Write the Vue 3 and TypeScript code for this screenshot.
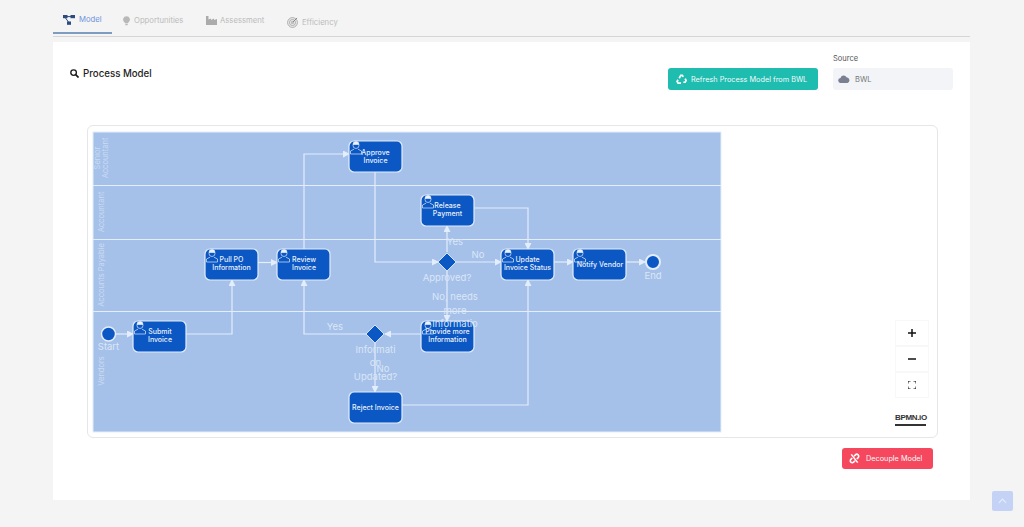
<template>
  <div class="page">
    <nav class="tabs">
      <a v-for="tab in tabs" :key="tab.name" class="tab" :class="{ active: tab.active }" :style="{ width: tab.width + 'px' }">
        <svg v-if="tab.name === 'Model'" class="tab-icon" viewBox="0 0 12 10">
          <rect x="0" y="0" width="4.500" height="3.200" fill="#2b4c7e" />
          <rect x="7.500" y="0" width="4.500" height="3.200" fill="#2b4c7e" />
          <rect x="4" y="6.500" width="4" height="3.300" fill="#2b4c7e" />
          <path d="M4 1.600h4M2.500 3L5.500 7" stroke="#2b4c7e" fill="none" />
        </svg>
        <svg v-else-if="tab.name === 'Opportunities'" class="tab-icon bulb" viewBox="0 0 8 11">
          <path d="M4 0a3.800 3.800 0 0 0-2.400 6.800C2.200 7.400 2.400 7.800 2.400 8h3.200c0-.2.2-.6.8-1.200A3.800 3.800 0 0 0 4 0z" fill="#b8b8b8" />
          <rect x="2.600" y="8.600" width="2.800" height="1.800" rx=".6" fill="#b8b8b8" />
        </svg>
        <svg v-else-if="tab.name === 'Assessment'" class="tab-icon factory" viewBox="0 0 11 9">
          <path d="M0 0h2.500v3.500L5 2.500v1.500l3-1.500v1.500l3-1v6H0z" fill="#ababab" />
        </svg>
        <svg v-else class="tab-icon target" viewBox="0 0 12 12">
          <g fill="none" stroke="#a0a0a0">
            <circle cx="6" cy="6" r="5.300" />
            <circle cx="6" cy="6" r="3.300" />
            <circle cx="6" cy="6" r="1.300" />
          </g>
          <path d="M6 6l5-5" stroke="#808080" />
        </svg>
        <span :class="{ lower: tab.name === 'Efficiency' }">{{ tab.name }}</span>
      </a>
    </nav>

    <main class="card">
      <header class="card-head">
        <h1 class="title">
          <svg class="search" viewBox="0 0 10 10">
            <circle cx="4" cy="4" r="3.100" fill="none" stroke="#1b1b1b" stroke-width="1.500" />
            <path d="M6.300 6.300L9.500 9.500" stroke="#1b1b1b" stroke-width="1.800" />
          </svg>
          Process Model
        </h1>
        <div class="actions">
          <button class="btn refresh" type="button">
            <svg class="btn-icon" viewBox="0 0 12 12" fill="none" stroke="#fff" stroke-width="1.900">
              <path d="M3.500 4.600L5.200 1.500h1.700l1 1.700" />
              <path d="M10 5l1 2.200-1 1.800H8" />
              <path d="M5.500 10H2.300L1.200 8.100l1-1.800" />
            </svg>
            Refresh Process Model from BWL
          </button>
          <div class="source">
            <label class="source-label">Source</label>
            <div class="source-box">
              <svg class="cloud" viewBox="0 0 12 8">
                <path d="M3 8a2.500 2.500 0 0 1-.5-5A3.200 3.200 0 0 1 8.500 2.200 3 3 0 0 1 9.500 8z" fill="#7a7f92" />
              </svg>
              BWL
            </div>
          </div>
        </div>
      </header>

      <section class="canvas">
        <svg class="diagram" viewBox="88 126 849 311" width="849" height="311">
          <defs>
            <marker id="arrow" markerWidth="7" markerHeight="7" refX="6" refY="3.500" orient="auto" markerUnits="userSpaceOnUse">
              <path d="M0 0L7 3.500 0 7z" fill="#e3edfb" />
            </marker>
          </defs>

          <rect x="93" y="132" width="628" height="300" fill="#a5c1e9" stroke="#e3edfb" />
          <path d="M93 185.500H721M93 239.500H721M93 311.500H721" stroke="#e3edfb" fill="none" />

          <text
            v-for="lane in lanes"
            :key="lane.x + '-' + lane.y"
            class="lane-label"
            text-anchor="middle"
            :transform="`translate(${lane.x} ${lane.y}) rotate(-90)`"
          >{{ lane.text }}</text>

          <path
            v-for="edge in edges"
            :key="edge"
            :d="edge"
            fill="none"
            stroke="#e3edfb"
            stroke-width="1.200"
            marker-end="url(#arrow)"
          />

          <circle cx="108.500" cy="334" r="7" fill="#0b57c4" stroke="#e3edfb" stroke-width="1.500" />
          <circle cx="653" cy="262" r="7" fill="#0b57c4" stroke="#e3edfb" stroke-width="2" />
          <path
            v-for="d in diamonds"
            :key="d.x"
            :d="`M${d.x} ${d.y - 9}l9 9-9 9-9-9z`"
            fill="#0b57c4"
            stroke="#d3e2f7"
          />

          <g v-for="task in tasks" :key="task.x + '-' + task.y">
            <rect :x="task.x" :y="task.y" width="53" height="31" rx="5" fill="#0b57c4" stroke="#e3edfb" stroke-width="1.200" />
            <g v-if="task.icon !== false" fill="none" stroke="#dfeafb" stroke-width=".7">
              <circle :cx="task.x + 7" :cy="task.y + 4.500" r="3" />
              <path :d="`M${task.x + 4} ${task.y + 3.500}a3 3 0 0 1 6 0z`" fill="#eef4fd" />
              <path :d="`M${task.x + 1.500} ${task.y + 13}v-3l3.500-1.800M${task.x + 1.500} ${task.y + 13}h11v-3l-3.500-1.800`" />
            </g>
            <text class="task-label" text-anchor="middle">
              <tspan v-for="(line, i) in task.lines" :key="line" :x="task.tx ?? task.x + 26.500" :y="task.ty + i * 8">{{ line }}</tspan>
            </text>
          </g>

          <text
            v-for="label in labels"
            :key="label.text + label.y"
            class="flow-label"
            :x="label.x"
            :y="label.y"
            text-anchor="middle"
          >{{ label.text }}</text>
        </svg>

        <div class="zoom-controls">
          <button class="zoom-btn" type="button">
            <svg viewBox="0 0 8 8" width="8" height="8"><path d="M4 0v8M0 4h8" stroke="#111" stroke-width="1.500" /></svg>
          </button>
          <button class="zoom-btn" type="button">
            <svg viewBox="0 0 8 8" width="8" height="8"><path d="M0 4h8" stroke="#111" stroke-width="1.500" /></svg>
          </button>
          <button class="zoom-btn" type="button">
            <svg viewBox="0 0 8 8" width="8" height="8"><path d="M0 2.500V0h2.500M5.500 0H8v2.500M8 5.500V8H5.500M2.500 8H0V5.500" fill="none" stroke="#111" /></svg>
          </button>
        </div>
        <div class="bpmn-logo">BPMN.iO</div>
      </section>

      <footer class="card-foot">
        <button class="btn decouple" type="button">
          <svg class="btn-icon" viewBox="0 0 12 12" fill="none" stroke="#fff" stroke-width="1.700">
            <path d="M2.500 1.500l7 9" />
            <path d="M5.500 3.500L7 2a2 2 0 0 1 3 3L8.500 6.500" />
            <path d="M6.500 8.500L5 10a2 2 0 0 1-3-3L3.500 5.500" />
          </svg>
          Decouple Model
        </button>
      </footer>
    </main>

    <button class="to-top" type="button">
      <svg viewBox="0 0 10 6" width="9" height="6"><path d="M1 5l4-4 4 4" fill="none" stroke="#e6ecfc" stroke-width="1.300" /></svg>
    </button>
  </div>
</template>

<script setup lang="ts">
interface Tab {
  name: string
  width: number
  active?: boolean
}

interface Task {
  x: number
  y: number
  lines: string[]
  ty: number
  tx?: number
  icon?: boolean
}

const tabs: Tab[] = [
  { name: 'Model', width: 59, active: true },
  { name: 'Opportunities', width: 82 },
  { name: 'Assessment', width: 80 },
  { name: 'Efficiency', width: 70 },
]

const lanes = [
  { x: 100, y: 158, text: 'Senior' },
  { x: 108, y: 158, text: 'Accountant' },
  { x: 104, y: 212, text: 'Accountant' },
  { x: 104, y: 275, text: 'Accounts Payable' },
  { x: 104, y: 371, text: 'Vendors' },
]

const edges = [
  'M116 334H133',
  'M186 334H232V280',
  'M258 262.500H277',
  'M304 249V154H349',
  'M375 172V262H438',
  'M447 252V226',
  'M456 262H501',
  'M474 208H528V249',
  'M554 262H573',
  'M626 262H645',
  'M447 271V321',
  'M421 334H385',
  'M366 334H304V280',
  'M375 343V392',
  'M402 405H528V280',
]

const diamonds = [
  { x: 447, y: 262 },
  { x: 375, y: 334 },
]

const tasks: Task[] = [
  { x: 349, y: 141, lines: ['Approve', 'Invoice'], ty: 154.500, tx: 375.500 },
  { x: 421, y: 195, lines: ['Release', 'Payment'], ty: 208 },
  { x: 205, y: 249, lines: ['Pull PO', 'Information'], ty: 262 },
  { x: 277, y: 249, lines: ['Review', 'Invoice'], ty: 262, tx: 304 },
  { x: 501, y: 249, lines: ['Update', 'Invoice Status'], ty: 262 },
  { x: 573, y: 249, lines: ['Notify Vendor'], ty: 266.500, tx: 600 },
  { x: 133, y: 321, lines: ['Submit', 'Invoice'], ty: 333.500, tx: 160 },
  { x: 421, y: 321, lines: ['Provide more', 'Information'], ty: 334, tx: 447.500 },
  { x: 349, y: 392, lines: ['Reject Invoice'], ty: 410, icon: false },
]

const labels = [
  { text: 'Start', x: 108.500, y: 350 },
  { text: 'End', x: 653, y: 279 },
  { text: 'Yes', x: 455, y: 245 },
  { text: 'No', x: 478, y: 258 },
  { text: 'Approved?', x: 447, y: 281 },
  { text: 'No, needs', x: 455, y: 300 },
  { text: 'more', x: 455, y: 314 },
  { text: 'Informatio', x: 455, y: 327 },
  { text: 'Yes', x: 335, y: 330 },
  { text: 'Informati', x: 375.500, y: 353 },
  { text: 'on', x: 375.500, y: 366 },
  { text: 'No', x: 383, y: 372 },
  { text: 'Updated?', x: 375.500, y: 380 },
]
</script>

<style scoped>
.page {
  position: relative;
  height: 527px;
  padding: 10px 54px 0 53px;
  box-sizing: border-box;
  background: #f4f4f4;
  font-family: Inter, "Noto Sans", sans-serif;
  overflow: hidden;
}

.tabs {
  display: flex;
  gap: 1px;
  height: 26px;
  border-bottom: 1px solid #d6d6d6;
}

.tab {
  display: flex;
  align-items: center;
  gap: 4px;
  box-sizing: border-box;
  height: 24px;
  padding: 0 0 3px 10px;
  font-size: 7.700px;
  color: #bbb;
}

.tab.active {
  color: #6f93dc;
  border-bottom: 2px solid #7d9cc0;
}

.tab-icon {
  flex: none;
  width: 12px;
  height: 10px;
}

.tab-icon.bulb {
  width: 7px;
  height: 10px;
}

.tab-icon.factory {
  width: 11px;
  height: 9px;
  margin-right: -1px;
}

.tab-icon.target {
  width: 11px;
  height: 11px;
  margin-top: 3px;
}

.lower {
  margin-top: 3px;
}

.card {
  display: flex;
  flex-direction: column;
  height: 458px;
  margin-top: 5px;
  padding: 0 17px 0 34px;
  box-sizing: border-box;
  background: #fff;
}

.card-head {
  display: flex;
  justify-content: space-between;
  height: 83px;
}

.title {
  display: flex;
  align-items: center;
  gap: 4px;
  height: 14px;
  margin: 24px 0 0 -17px;
  font-size: 9.700px;
  font-weight: 500;
  color: #1e1e1e;
}

.search {
  width: 9px;
  height: 9px;
}

.actions {
  display: flex;
  align-items: flex-end;
  gap: 15px;
  height: 48px;
}

.btn {
  display: flex;
  align-items: center;
  box-sizing: border-box;
  border: none;
  border-radius: 3px;
  font-family: inherit;
  font-size: 7.300px;
  color: #f2fbfa;
  white-space: nowrap;
}

.btn-icon {
  flex: none;
  width: 11px;
  height: 11px;
}

.refresh {
  gap: 4px;
  width: 150px;
  height: 22px;
  padding: 0 0 0 8px;
  background: #1fbcb0;
}

.source {
  display: flex;
  flex-direction: column;
  gap: 5px;
  width: 120px;
}

.source-label {
  font-size: 7.500px;
  color: #555;
}

.source-box {
  display: flex;
  align-items: center;
  gap: 5px;
  height: 22px;
  padding-left: 5px;
  border-radius: 3px;
  background: #f2f4f8;
  font-size: 7.500px;
  color: #777;
}

.cloud {
  width: 12px;
  height: 8px;
}

.canvas {
  position: relative;
  box-sizing: border-box;
  width: 851px;
  height: 313px;
  border: 1px solid #e6e6e6;
  border-radius: 6px;
}

.diagram {
  display: block;
}

.lane-label {
  font-size: 7.500px;
  fill: #cddcf2;
}

.task-label {
  font-size: 7px;
  font-weight: 500;
  fill: #e9f0fb;
}

.flow-label {
  font-size: 9.500px;
  fill: #dbe6f7;
}

.zoom-controls {
  position: absolute;
  top: 194px;
  left: 807px;
  display: flex;
  flex-direction: column;
}

.zoom-btn {
  display: flex;
  align-items: center;
  justify-content: center;
  box-sizing: border-box;
  width: 34px;
  height: 26px;
  border: 1px solid #f8f8f8;
  background: #fff;
  padding: 0;
}

.bpmn-logo {
  position: absolute;
  top: 286px;
  left: 807px;
  width: 31px;
  padding-bottom: 1px;
  border-bottom: 2px solid #333;
  font-family: "Liberation Sans", sans-serif;
  font-size: 8px;
  font-weight: 700;
  line-height: 11px;
  letter-spacing: -0.35px;
  color: #333;
  white-space: nowrap;
}

.card-foot {
  display: flex;
  justify-content: flex-end;
  width: 846px;
  margin-top: 10px;
}

.decouple {
  gap: 6px;
  width: 91px;
  height: 21px;
  padding: 0 0 0 7px;
  background: #f5485f;
}

.to-top {
  position: absolute;
  top: 491px;
  left: 992px;
  display: flex;
  align-items: center;
  justify-content: center;
  width: 21px;
  height: 20px;
  padding: 0;
  border: none;
  border-radius: 2px;
  background: #c4d2f6;
}
</style>
